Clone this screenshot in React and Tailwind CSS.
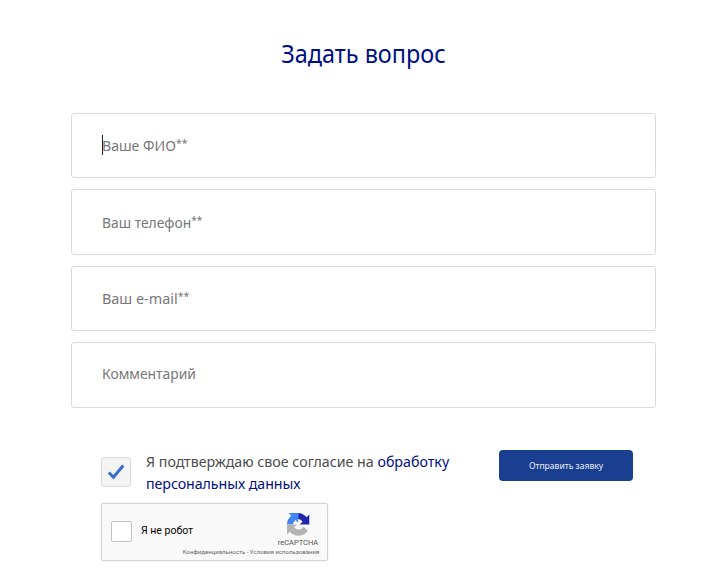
import React from 'react';

const fields = [
  { label: 'Ваше ФИО', required: true, box: 'h-[65px] pb-px', text: 'scale-x-[0.94]', focused: true },
  { label: 'Ваш телефон', required: true, box: 'h-[66px]', text: 'scale-x-[0.922]' },
  { label: 'Ваш e-mail', required: true, box: 'h-[65px] pb-px', text: 'scale-x-[0.96]' },
  { label: 'Комментарий', box: 'h-[66px] pb-[4px]', text: 'scale-x-[0.925]' },
];

function Field({ label, required, box, text, focused }) {
  return (
    <div className={`relative flex items-center rounded-[3px] border border-[#dadada] pl-[30px] ${box}`}>
      {focused && <span className="absolute left-[30px] top-[21px] h-5 w-px bg-[#222]" />}
      <span className={`origin-left whitespace-nowrap text-[15px] leading-5 text-[#777] ${text}`}>
        {label}
        {required && <span className="align-[4px] text-[11px] leading-[0]">**</span>}
      </span>
    </div>
  );
}

function RecaptchaLogo() {
  return (
    <svg className="h-[23px] w-[23px]" viewBox="0 0 64 64">
      <path fill="#2127ad" d="M62 32V4.500l-7.600 7.600A32 32 0 0 0 31 0v16.500a16 16 0 0 1 12.400 7.600L35 32z" />
      <path fill="#4285f4" d="M31 0H4.500l7.600 7.600A32 32 0 0 0 0 32h16.500a16 16 0 0 1 7.600-12.400L31 27z" />
      <path fill="#b3b3b3" d="M0 32v27.500l7.600-7.600A32 32 0 0 0 58 49.500L46 38a16 16 0 0 1-26.400 1.900L28 32z" />
    </svg>
  );
}

export default function App() {
  return (
    <main className="h-[588px] w-[727px] overflow-hidden bg-white font-['Noto_Sans',sans-serif]">
      <h1 className="scale-x-[0.92] pt-[35px] text-center text-[25.5px] leading-[36px] text-[#000f82]">
        Задать вопрос
      </h1>
      <form className="ml-[71px] mt-[42px] w-[585px]">
        <div className="flex flex-col gap-[11px]">
          {fields.map((f) => <Field key={f.label} {...f} />)}
        </div>
        <div className="mt-[42px] flex pl-[30px]">
          <div className="mt-[7px] flex h-[30px] w-[30px] shrink-0 items-center justify-center rounded-[3px] border border-[#dadada] bg-[#f4f4f4]">
            <svg className="h-[18px] w-[18px]" viewBox="0 0 18 18" fill="none" stroke="#3a6bd0" strokeWidth="3">
              <path d="M1.800 9.500 6.500 14.300 16.200 2.500" />
            </svg>
          </div>
          <p className="ml-[15px] w-[353px] origin-left scale-x-[0.948] whitespace-nowrap text-[15px] leading-[22px] text-[#4b4b4b]">
            Я подтверждаю свое согласие на <a className="text-[#000f82]">обработку</a>
            <br />
            <a className="tracking-[-0.07px] text-[#000f82]">персональных данных</a>
          </p>
          <button type="button" className="flex h-[31px] w-[134px] shrink-0 items-center justify-center whitespace-nowrap rounded-[4px] bg-[#1a3f90] text-[9px] text-[#e8edf7]">
            <span className="scale-x-[0.95]">Отправить заявку</span>
          </button>
        </div>
        <div className="ml-[30px] mt-[9px] flex h-[58px] w-[227px] justify-between rounded-[2px] border border-[#d3d3d3] bg-[#f9f9f9] font-[Roboto,sans-serif] shadow-[0_0_3px_rgba(0,0,0,0.08)]">
          <div className="flex h-[54px] items-center pl-[9px]">
            <span className="h-[21px] w-[21px] rounded-[2px] border border-[#c1c1c1] bg-white" />
            <span className="ml-[9px] whitespace-nowrap text-[10.5px] text-black">Я не робот</span>
          </div>
          <div className="flex w-0 flex-col items-end pt-[9px]">
            <div className="mr-[9px] flex w-[40px] flex-col items-center">
              <RecaptchaLogo />
              <span className="mt-[2px] text-[7.5px] leading-[9px] text-[#555]">reCAPTCHA</span>
            </div>
            <span className="mr-[8px] origin-right scale-x-[1.01] whitespace-nowrap text-[6px] leading-[9px] text-[#666]">Конфиденциальность - Условия использования</span>
          </div>
        </div>
      </form>
    </main>
  );
}
